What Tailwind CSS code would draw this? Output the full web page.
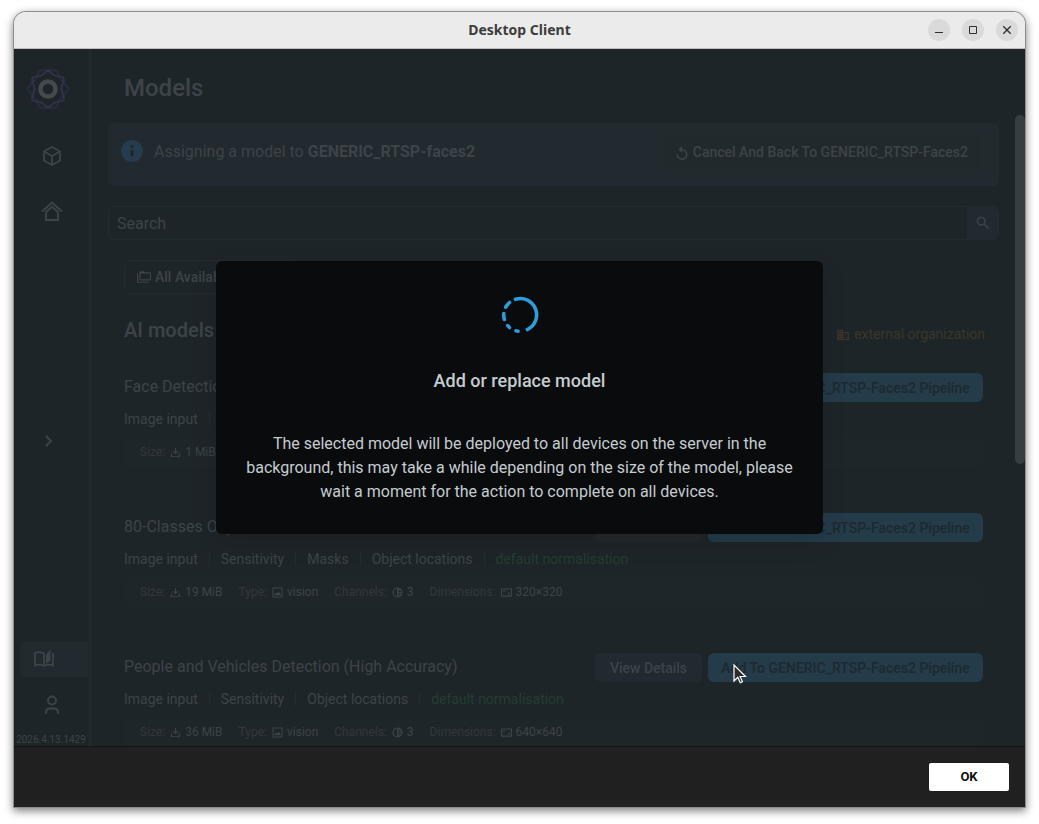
<!DOCTYPE html>
<html lang="en">
<head>
<meta charset="utf-8">
<meta name="viewport" content="width=device-width, initial-scale=1">
<title>Desktop Client</title>
<script src="https://cdn.jsdelivr.net/npm/@tailwindcss/browser@4"></script>
</head>
<body class="h-screen bg-white px-[14px] pt-3 pb-[17px] font-['Roboto',sans-serif]">

<svg class="hidden" aria-hidden="true">
  <symbol id="download" viewBox="0 0 24 24"><path d="M2 14h2.500v6h15v-6H22v8H2zM10.800 2h2.400v9.500l3.300-3.300 1.600 1.600L12 16 5.900 9.800l1.600-1.600 3.300 3.300z"/></symbol>
  <symbol id="image" viewBox="0 0 24 24"><path d="M1 1h22v22H1zm2.400 2.400v17.200h17.200V3.400zM5.500 18v-3l2.500-3 2.500 2.500L14 10.500l4.500 4.500v3z" fill-rule="evenodd"/></symbol>
  <symbol id="channels" viewBox="0 0 24 24"><path d="M12 1a11 11 0 1 0 0 22 11 11 0 0 0 0-22zm-1 19.500A8.600 8.600 0 0 1 11 3.500zM13.500 3.600c1.500.3 2.900 1 4 1.900h-4zm0 4.400h6c.5.9.8 1.800 1 2.800h-7zm0 5.200h7c-.2 1-.5 2-1 2.800h-6zm0 5.300h4c-1.100.9-2.500 1.600-4 1.900z" fill-rule="evenodd"/></symbol>
  <symbol id="aspect" viewBox="0 0 24 24"><path d="M0 3h24v18H0zm2.400 2.400v13.200h19.200V5.400zM5 7.500h5L5 12.500zm14 9h-6l6-6z" fill-rule="evenodd"/></symbol>
</svg>

<div class="flex h-full flex-col rounded-t-xl shadow-[0_0_0_1px_#8d8d8d,0_3px_8px_1px_rgba(0,0,0,0.5)]">

  <header class="flex h-[37px] shrink-0 items-center rounded-t-xl border-b border-[#bfbfbf] bg-[#ebebeb] pr-[7px] pl-[7px]">
    <div class="w-[90px]"></div>
    <h1 class="flex-1 text-center font-['Noto_Sans',sans-serif] text-sm font-bold text-[#3d3d3d]">Desktop Client</h1>
    <div class="flex w-[90px] gap-3 text-[#2e2e2e]">
      <button aria-label="Minimize" class="grid size-[22px] place-items-center rounded-full bg-[#dadada]"><svg class="size-[22px]" viewBox="0 0 22 22" fill="none" stroke="currentColor"><path d="M7 13.500h8"/></svg></button>
      <button aria-label="Maximize" class="grid size-[22px] place-items-center rounded-full bg-[#dadada]"><svg class="size-[22px]" viewBox="0 0 22 22" fill="none" stroke="currentColor"><path d="M7.500 7.500h7v7h-7z"/></svg></button>
      <button aria-label="Close" class="grid size-[22px] place-items-center rounded-full bg-[#dadada]"><svg class="size-[22px]" viewBox="0 0 22 22" fill="none" stroke="currentColor" stroke-width="1.300"><path d="M7.300 7.300l7.400 7.400M14.700 7.300l-7.400 7.400"/></svg></button>
    </div>
  </header>

  <div class="relative flex min-h-0 flex-1 overflow-hidden bg-[#1e2528] text-[#3c4449]">

    <nav class="flex w-[78px] shrink-0 flex-col border-r-4 border-[#22292d]" aria-label="Main">
      <a href="#" aria-label="Home" class="mt-[18px] ml-3 block">
        <svg class="size-11" viewBox="0 0 44 44" fill="none">
          <path d="M16 3h12q2 0 3 1.700l2.500 5.500q.8 1.600 2 3.100l6 6.500q1.700 2.200 0 4.400l-6 6.500q-1.200 1.500-2 3.100L31 39.300Q30 41 28 41H16q-2 0-3-1.700l-2.500-5.500q-.8-1.600-2-3.100l-6-6.500q-1.700-2.200 0-4.400l6-6.500q1.200-1.500 2-3.100L13 4.700Q14 3 16 3z" stroke="#282b45" stroke-width="1.800"/>
          <path d="M22 4q2 0 4 2.500t5 2.700q6 .3 6.800 2.300t-1 5.300q-1.300 2.500-1.300 5.200t1.300 5.200q1.800 3.300 1 5.300T31 34.800q-3 .2-5 2.700T22 40t-4-2.500-5-2.700q-6-.3-6.800-2.300t1-5.300q1.300-2.500 1.300-5.200t-1.300-5.200q-1.800-3.300-1-5.300T13 9.200q3-.2 5-2.700T22 4z" stroke="#32334a" stroke-width="1.800"/>
          <circle cx="22" cy="22" r="7.500" stroke="#434a4e" stroke-width="4.500"/>
        </svg>
      </a>
      <a href="#" aria-label="Models" class="mt-[33px] ml-[26px] block"><svg class="size-6" viewBox="0 0 24 24" fill="none" stroke="currentColor" stroke-width="1.800"><path d="M12 3l8 4.500v9L12 21l-8-4.500v-9zM4 7.500l8 4.500 8-4.500M12 12v9"/></svg></a>
      <a href="#" aria-label="Sites" class="mt-[31px] ml-[26px] block"><svg class="size-6" viewBox="0 0 24 24" fill="none" stroke="currentColor" stroke-width="1.900"><path d="M2 12.500L12 3.500l10 9M6 13v8h12v-8l-6-5.300z"/></svg></a>
      <button aria-label="Expand menu" class="mt-[206px] ml-[22px] size-6"><svg class="size-6" viewBox="0 0 24 24" fill="none" stroke="currentColor" stroke-width="2"><path d="M10 7l5 5-5 5"/></svg></button>
      <a href="#" aria-label="Library" class="mt-auto ml-1.5 flex h-[35px] items-center rounded-l-md bg-[#222a30] pb-0.5 pl-3"><svg class="size-6" viewBox="0 0 24 24" fill="none" stroke="currentColor" stroke-width="1.800"><path d="M12 19V6.500Q7 4 3 6v12.500q4-2 9 .5 5-2.500 9-.5V6"/><path d="M14 8l4.500-5.500v11L14 17z" fill="currentColor" stroke="none"/></svg></a>
      <a href="#" aria-label="Account" class="mt-4 ml-[26px] block"><svg class="size-6" viewBox="0 0 24 24" fill="none" stroke="currentColor" stroke-width="1.900"><circle cx="12" cy="7.500" r="4"/><path d="M6 21v-1.500q0-4 4-4h4q4 0 4 4V21"/></svg></a>
      <div class="mt-[17px] text-center text-[10px] leading-3">2026.4.13.1429</div>
    </nav>

    <main class="flex min-w-0 flex-1 flex-col px-4">
      <h2 class="mt-[23px] px-4 text-2xl font-medium">Models</h2>
      <div class="mt-[19px] flex h-[63px] shrink-0 items-start rounded-md border-b border-[#202d34] bg-[#22292f] px-3">
        <svg class="mt-4 size-6 shrink-0 text-[#243c4e]" viewBox="0 0 24 24"><circle cx="12" cy="12" r="11" fill="currentColor"/><path d="M12 7.500v.1M12 12v4" stroke="#1e2528" stroke-width="3" stroke-linecap="round"/></svg>
        <p class="mt-[17px] ml-[10px] flex-1 text-base">Assigning a model to <b>GENERIC_RTSP-faces2</b></p>
        <button class="mt-[11px] mr-[7px] flex h-[35px] items-center gap-1 rounded-md bg-[#22292d] px-3 text-sm font-medium"><svg class="mt-0.5 size-[14px]" viewBox="0 0 24 24" fill="currentColor"><path d="M12 5V0L6 6l6 6V7.500a6.800 6.800 0 1 1-6.800 6.800H2.500A9.500 9.500 0 1 0 12 5z"/></svg>Cancel And Back To GENERIC_RTSP-Faces2</button>
      </div>
      <form class="mt-5 flex h-[34px] shrink-0 overflow-hidden rounded-md border border-[#242b2f]">
        <input type="search" aria-label="Search" placeholder="Search" class="min-w-0 flex-1 px-2 pt-0.5 text-base placeholder:text-[#3c4449]">
        <button type="button" aria-label="Submit search" class="grid w-[31px] place-items-center bg-[#222930]"><svg class="size-[14px]" viewBox="0 0 24 24" fill="none" stroke="currentColor" stroke-width="2.500"><circle cx="9" cy="9" r="6.500"/><path d="M14 14l8 8"/></svg></button>
      </form>

      <div class="mt-5 flex min-h-0 flex-1 flex-col overflow-hidden px-4">
        <button class="flex h-[34px] shrink-0 items-center gap-1 self-start rounded-md border border-[#242b2f] px-3 text-sm font-medium"><svg class="size-[14px]" viewBox="0 0 24 24" fill="currentColor"><path d="M22 4a2 2 0 0 1 2 2v10a2 2 0 0 1-2 2H6a2 2 0 0 1-2-2V4a2 2 0 0 1 2-2h6l2 2h8M2 6v14h18v2H2a2 2 0 0 1-2-2V6h2m4 0v10h16V6z"/></svg>All Available Models</button>
        <div class="mt-5 -mr-0.5 flex shrink-0 items-center justify-between">
          <h3 class="text-xl leading-8 font-medium">AI models</h3>
          <span class="mt-2 flex items-center gap-1 text-sm text-[#3b362b]"><svg class="mt-0.5 size-[14px]" viewBox="0 0 24 24" fill="currentColor"><path d="M12 7V3H2v18h20V7H12zM6 19H4v-2h2v2zm0-4H4v-2h2v2zm0-4H4V9h2v2zm0-4H4V5h2v2zm4 12H8v-2h2v2zm0-4H8v-2h2v2zm0-4H8V9h2v2zm0-4H8V5h2v2zm10 12h-8v-2h2v-2h-2v-2h2v-2h-2V9h8v10zm-2-8h-2v2h2v-2zm0 4h-2v2h2v-2z"/></svg>external organization</span>
        </div>

        <div class="mt-[27px] flex flex-col gap-[46px]">
          <article class="flex flex-col">
            <div class="flex h-[29px] items-center gap-1.5">
              <h4 class="flex-1 self-start text-base leading-7">Face Detection</h4>
              <button class="h-[29px] w-[107px] rounded-md bg-[#22292d] text-sm font-medium">View Details</button>
              <button class="h-[29px] w-[275px] rounded-md bg-[#243b49] text-sm font-medium text-[#1e292f]">Add To GENERIC_RTSP-Faces2 Pipeline</button>
            </div>
            <ul class="mt-[10px] flex h-[14px] items-center divide-x divide-[#252c30] text-sm leading-[14px]"><li class="pr-[11px]">Image input</li><li class="px-[11px]">Sensitivity</li><li class="pl-[11px]">Object locations</li></ul>
            <dl class="mt-3 flex h-[29px] items-center gap-4 rounded-md bg-[#1f2629] px-4 pb-0.5 text-xs">
              <div class="flex items-center gap-[5px]"><dt class="text-[#31383d]">Size:</dt><dd class="flex items-center gap-1"><svg class="mt-0.5 size-[11px]" fill="currentColor"><use href="#download"/></svg>1 MiB</dd></div>
            </dl>
          </article>

          <article class="flex flex-col">
            <div class="flex h-[29px] items-center gap-1.5">
              <h4 class="flex-1 self-start text-base leading-7">80-Classes Object Detection</h4>
              <button class="h-[29px] w-[107px] rounded-md bg-[#22292d] text-sm font-medium">View Details</button>
              <button class="h-[29px] w-[275px] rounded-md bg-[#243b49] text-sm font-medium text-[#1e292f]">Add To GENERIC_RTSP-Faces2 Pipeline</button>
            </div>
            <ul class="mt-[10px] flex h-[14px] items-center divide-x divide-[#252c30] text-sm leading-[14px]"><li class="pr-[11px]">Image input</li><li class="px-[11px]">Sensitivity</li><li class="px-[11px]">Masks</li><li class="px-[11px]">Object locations</li><li class="pl-[11px] text-[#253c33]">default normalisation</li></ul>
            <dl class="mt-3 flex h-[29px] items-center gap-4 rounded-md bg-[#1f2629] px-4 pb-0.5 text-xs">
              <div class="flex items-center gap-[5px]"><dt class="text-[#31383d]">Size:</dt><dd class="flex items-center gap-1"><svg class="mt-0.5 size-[11px]" fill="currentColor"><use href="#download"/></svg>19 MiB</dd></div>
              <div class="flex items-center gap-[5px]"><dt class="text-[#31383d]">Type:</dt><dd class="flex items-center gap-1"><svg class="mt-0.5 size-[11px]" fill="currentColor"><use href="#image"/></svg>vision</dd></div>
              <div class="flex items-center gap-[5px]"><dt class="text-[#31383d]">Channels:</dt><dd class="flex items-center gap-1"><svg class="mt-0.5 size-[11px]" fill="currentColor"><use href="#channels"/></svg>3</dd></div>
              <div class="flex items-center gap-[5px]"><dt class="text-[#31383d]">Dimensions:</dt><dd class="flex items-center gap-1"><svg class="mt-0.5 size-[11px]" fill="currentColor"><use href="#aspect"/></svg>320×320</dd></div>
            </dl>
          </article>

          <article class="flex flex-col">
            <div class="flex h-[29px] items-center gap-1.5">
              <h4 class="flex-1 self-start text-base leading-7">People and Vehicles Detection (High Accuracy)</h4>
              <button class="h-[29px] w-[107px] rounded-md bg-[#222930] text-sm font-medium">View Details</button>
              <button class="h-[29px] w-[275px] rounded-md bg-[#243b49] text-sm font-medium text-[#1e292f]">Add To GENERIC_RTSP-Faces2 Pipeline</button>
            </div>
            <ul class="mt-[10px] flex h-[14px] items-center divide-x divide-[#252c30] text-sm leading-[14px]"><li class="pr-[11px]">Image input</li><li class="px-[11px]">Sensitivity</li><li class="px-[11px]">Object locations</li><li class="pl-[11px] text-[#253c33]">default normalisation</li></ul>
            <dl class="mt-3 flex h-[29px] items-center gap-4 rounded-md bg-[#1f2629] px-4 pb-0.5 text-xs">
              <div class="flex items-center gap-[5px]"><dt class="text-[#31383d]">Size:</dt><dd class="flex items-center gap-1"><svg class="mt-0.5 size-[11px]" fill="currentColor"><use href="#download"/></svg>36 MiB</dd></div>
              <div class="flex items-center gap-[5px]"><dt class="text-[#31383d]">Type:</dt><dd class="flex items-center gap-1"><svg class="mt-0.5 size-[11px]" fill="currentColor"><use href="#image"/></svg>vision</dd></div>
              <div class="flex items-center gap-[5px]"><dt class="text-[#31383d]">Channels:</dt><dd class="flex items-center gap-1"><svg class="mt-0.5 size-[11px]" fill="currentColor"><use href="#channels"/></svg>3</dd></div>
              <div class="flex items-center gap-[5px]"><dt class="text-[#31383d]">Dimensions:</dt><dd class="flex items-center gap-1"><svg class="mt-0.5 size-[11px]" fill="currentColor"><use href="#aspect"/></svg>640×640</dd></div>
            </dl>
          </article>
        </div>
      </div>
    </main>

    <div class="w-[10px] shrink-0 pt-[66px]"><div class="h-[349px] rounded-full bg-[#363e44]"></div></div>

    <!-- Progress dialog -->
    <div class="absolute inset-0 flex items-center justify-center">
      <section role="dialog" aria-labelledby="dialog-title" class="flex w-[607px] flex-col items-center rounded-md bg-[#090b0d] px-6 pt-[34px] pb-[30px] text-center text-[#c5ccd0] shadow-[0_8px_24px_rgba(0,0,0,0.12)]">
        <svg class="size-10" viewBox="-20 -20 40 40" fill="none" stroke="#2d9cdb" stroke-width="3.600" stroke-linecap="round"><path d="M-4.500 -15.700A16.300 16.300 0 0 1 7.300 14.600M-10.500 -12.500A16.300 16.300 0 0 0 -14.300 -7.800M-16.200 -1.500A16.300 16.300 0 0 0 -15.600 4.500M-12.300 10.700A16.300 16.300 0 0 0 -10.500 12.500M-4 15.800A16.300 16.300 0 0 0 -2 16.200"/></svg>
        <h2 id="dialog-title" class="mt-8 text-lg leading-7 font-medium">Add or replace model</h2>
        <p class="mt-[37px] text-base">The selected model will be deployed to all devices on the server in the background, this may take a while depending on the size of the model, please wait a moment for the action to complete on all devices.</p>
      </section>
    </div>

    <svg class="absolute top-[615px] left-[719px] h-5 w-[14px]" viewBox="0 0 14 20" fill="#2b2b2b" stroke="#fff" stroke-width="1.200" aria-hidden="true"><path d="M1 1v16l3.800-3.700 2.500 5.500 2.200-1-2.400-5.300H12.500z"/></svg>
  </div>

  <footer class="flex h-[61px] shrink-0 items-center justify-end border-t border-[#151515] bg-[#202020] px-4">
    <button class="h-7 w-20 rounded-xs bg-white text-[13px] font-bold text-[#111]">OK</button>
  </footer>
</div>
</body>
</html>
